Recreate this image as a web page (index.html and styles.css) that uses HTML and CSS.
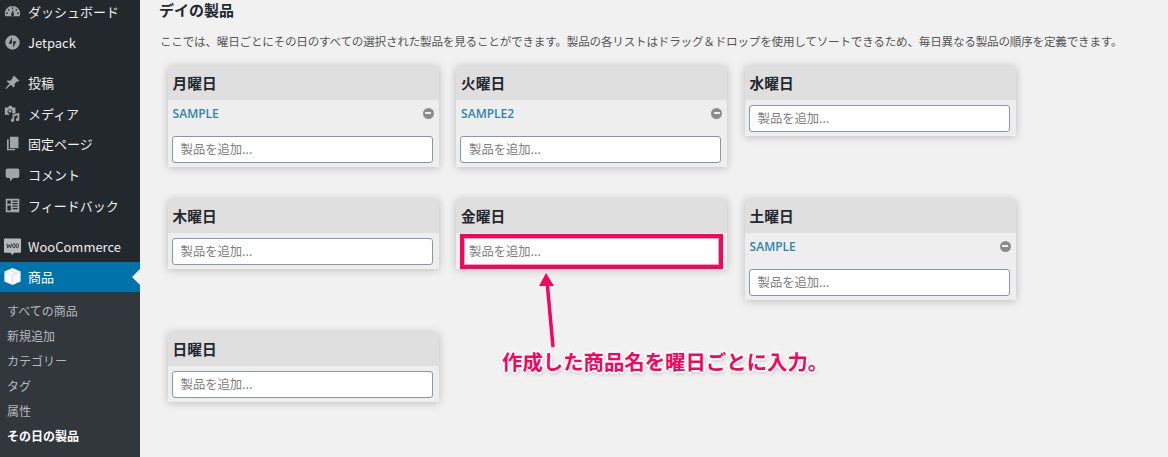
FILE: index.html
```html
<!DOCTYPE html>
<html lang="ja">
<head>
<meta charset="utf-8">
<title>デイの製品</title>
<link rel="stylesheet" href="styles.css">
</head>
<body>
<div class="page">
  <nav class="sidebar">
    <ul class="menu">
      <li class="item"><svg class="ico" viewBox="0 0 20 20"><path d="M10 3.500C5 3.500 1 7.500 1 12c0 1.300.3 2.500.8 3.500h16.400c.5-1 .8-2.200.8-3.500 0-4.500-4-8.500-9-8.500zM10 5a1 1 0 110 2 1 1 0 010-2zM5.500 7a1 1 0 110 2 1 1 0 010-2zm9 0a1 1 0 110 2 1 1 0 010-2zM3.500 11a1 1 0 110 2 1 1 0 010-2zm13 0a1 1 0 110 2 1 1 0 010-2zm-5.800-3l.8 5a1.700 1.700 0 11-3 0z" fill-rule="evenodd"/></svg><span>ダッシュボード</span></li>
      <li class="item"><svg class="ico" viewBox="0 0 20 20"><path d="M10 1.500a8.500 8.500 0 100 17 8.500 8.500 0 000-17zM9.300 11.500H5.400l3.900-7.600zm1.400-3h3.900l-3.900 7.600z" fill-rule="evenodd"/></svg><span>Jetpack</span></li>
      <li class="item item-gap"><svg class="ico" viewBox="0 0 20 20"><path d="M12 2l6 6-1.500 1-1.200-.3-3 3 .3 3-1.300 1.300-3.300-3.300-5.500 5-1-.5 5-6L3 8.800l1.300-1.300 3 .3 3-3-.3-1.300z"/></svg><span>投稿</span></li>
      <li class="item"><svg class="ico" viewBox="0 0 20 20"><path d="M1 3h4l1-2h3l1 2h3.500v7H9.500V8.800a2.800 2.800 0 10-3.500 1.400V11.500H1zM7 5.200a1.800 1.800 0 110 3.600 1.800 1.800 0 010-3.600zM10 11.500l8-2.500v8a2 2 0 11-2-2v-3l-4 1.200V18a2 2 0 11-2-2z"/></svg><span>メディア</span></li>
      <li class="item"><svg class="ico" viewBox="0 0 20 20"><path d="M7 2h10v13.500H7zM3.500 5H5.500v11.500H13V18H3.500z"/></svg><span>固定ページ</span></li>
      <li class="item"><svg class="ico" viewBox="0 0 20 20"><path d="M4 3h12a2 2 0 012 2v7a2 2 0 01-2 2h-5l-4 4v-4H4a2 2 0 01-2-2V5a2 2 0 012-2z"/></svg><span>コメント</span></li>
      <li class="item"><svg class="ico" viewBox="0 0 20 20"><path d="M2 2h16v16H2zM4 4v4h4V4zm6 0v1.500h6V4zm0 3v1.500h6V7zm-6 3v6h4v-6zm6 0v1.500h6V10zm0 3v1.500h6V13z" fill-rule="evenodd"/></svg><span>フィードバック</span></li>
      <li class="item item-gap woo"><svg class="ico woo-ico" viewBox="0 0 20 20"><path d="M2 1.500h16a1 1 0 011 1v13a1 1 0 01-1 1h-6l-2.500 2.500L8 16.500H2a1 1 0 01-1-1v-13a1 1 0 011-1z"/><path class="woo-mark" d="M4 7l1 4.500L6.500 8 8 11.500 9 7M11.500 7a1.300 2.200 0 100 4.400 1.300 2.200 0 000-4.400zM15 7a1.300 2.200 0 100 4.400 1.300 2.200 0 000-4.400z"/></svg><span>WooCommerce</span></li>
      <li class="item current"><svg class="ico" viewBox="0 0 20 20"><path d="M10 1l8.500 3.700v10.600L10 19l-8.500-3.700V4.700z"/><path class="box-line" d="M10 9v10M1.500 5l8.500 4 8.500-4M6 3l8.500 4"/></svg><span>商品</span></li>
    </ul>
    <ul class="submenu">
      <li>すべての商品</li>
      <li>新規追加</li>
      <li>カテゴリー</li>
      <li>タグ</li>
      <li>属性</li>
      <li class="sub-current">その日の製品</li>
    </ul>
  </nav>
  <main class="content">
    <h2 class="title">デイの製品</h2>
    <p class="desc">ここでは、曜日ごとにその日のすべての選択された製品を見ることができます。製品の各リストはドラッグ＆ドロップを使用してソートできるため、毎日異なる製品の順序を定義できます。</p>
    <div class="grid">
      <section class="card"><h3 class="card-head">月曜日</h3><div class="row"><a class="link">SAMPLE</a><i class="minus"></i></div><div class="field">製品を追加...</div></section>
      <section class="card"><h3 class="card-head">火曜日</h3><div class="row"><a class="link">SAMPLE2</a><i class="minus"></i></div><div class="field">製品を追加...</div></section>
      <section class="card"><h3 class="card-head">水曜日</h3><div class="field">製品を追加...</div></section>
      <section class="card"><h3 class="card-head">木曜日</h3><div class="field">製品を追加...</div></section>
      <section class="card card-hl"><h3 class="card-head">金曜日</h3><div class="field field-hl">製品を追加...</div></section>
      <section class="card"><h3 class="card-head">土曜日</h3><div class="row"><a class="link">SAMPLE</a><i class="minus"></i></div><div class="field">製品を追加...</div></section>
      <section class="card"><h3 class="card-head">日曜日</h3><div class="field">製品を追加...</div></section>
    </div>
  </main>
  <svg class="arrow" viewBox="0 0 30 90" width="30" height="90"><path d="M12 15l6 66" class="arrow-line"/><path d="M11 7l8 13H4z" class="arrow-tip"/></svg>
  <div class="note">作成した商品名を曜日ごとに入力。</div>
</div>
</body>
</html>
```
FILE: styles.css
```css
* { box-sizing: border-box; }
html, body { margin: 0; padding: 0; }
body { background: #f1f1f1; font-family: "Noto Sans CJK JP", "Open Sans", sans-serif; color: #444; }
.page { position: relative; width: 1168px; height: 457px; overflow: hidden; display: flex; }
.sidebar { width: 140px; flex: none; height: 457px; background: #23282d; overflow: hidden; }
.menu, .submenu { list-style: none; margin: 0; padding: 0; }
.menu { margin-top: -3.500px; }
.item { height: 30.6px; display: flex; align-items: center; padding-left: 4px; font-size: 13px; color: #eee; gap: 7px; }
.item-gap { margin-top: 9.800px; }
.woo { margin-top: 10.500px; }
.ico { width: 17px; height: 17px; fill: #a0a5aa; flex: none; }
.woo-ico { width: 19px; height: 19px; margin-left: -1px; margin-right: -1px; fill: #b4b9be; }
.woo-mark { fill: none; stroke: #23282d; stroke-width: .9; }
.current { background: #0073aa; color: #fff; position: relative; }
.current .ico { fill: #fff; width: 19px; height: 19px; margin-left: -1px; margin-right: -1px; }
.box-line { fill: none; stroke: #bcd6e3; stroke-width: .8; }
.current::after { content: ""; position: absolute; right: 0; top: 50%; margin-top: -8px; border: 8px solid transparent; border-right-color: #f1f1f1; border-left-width: 0; }
.submenu { background: #32373c; height: 170px; padding-top: 6px; }
.submenu li { height: 25px; line-height: 25px; padding-left: 7px; font-size: 12px; color: #b4b9be; }
.submenu .sub-current { color: #fff; font-weight: 700; }
.content { flex: 1; padding: 0 0 0 19px; min-width: 0; }
.title { margin: 0; font-size: 15px; line-height: 20px; font-weight: 700; color: #23282d; }
.desc { margin: 11px 0 0 1px; font-size: 11.600px; letter-spacing: -.22px; line-height: 20px; color: #555; white-space: nowrap; }
.grid { display: grid; grid-template-columns: repeat(3, 271px); column-gap: 17.500px; row-gap: 32px; align-items: start; margin: 15px 0 0 8.600px; }
.card { background: #eee; box-shadow: 0 1px 8px rgba(0,0,0,.22); padding-bottom: 4px; }
.card-hl { padding-bottom: 0; }
.card-head { margin: 0; height: 34px; padding-left: 5px; background: #dfdfdf; font-size: 14.700px; line-height: 34px; font-weight: 700; color: #23282d; }
.row { height: 26px; display: flex; align-items: center; justify-content: space-between; padding: 0 5px; margin-bottom: 10px; }
.link { font-family: "Open Sans", sans-serif; font-size: 12px; font-weight: 600; color: #2e85ad; }
.minus { width: 11px; height: 11px; border-radius: 50%; background: #8c8c8c; position: relative; }
.minus::after { content: ""; position: absolute; left: 2.500px; right: 2.500px; top: 4.500px; height: 2px; background: #eee; }
.field { margin: 5px 6px 0 4px; height: 27px; background: #fff; border: 1px solid #8d96a0; border-radius: 3px; padding-left: 8px; font-size: 12.300px; line-height: 25px; color: #808080; }
.field-hl { border: 4px solid #f7045c; border-radius: 0; padding-left: 5px; line-height: 26px; margin: 1px 4px 0 4px; height: 35px; box-shadow: inset 0 0 0 1px #b4b9be; }
.arrow { position: absolute; left: 535px; top: 266px; filter: drop-shadow(0 0 1px #fff); }
.arrow-line { stroke: #f7045c; stroke-width: 3.500; fill: none; }
.arrow-tip { fill: #f7045c; }
.note { position: absolute; left: 502px; top: 348px; font-size: 20.400px; line-height: 26px; font-weight: 700; color: #f7045c; white-space: nowrap; text-shadow: 1px 1px 0 #fff, -1px 1px 0 #fff, 1px -1px 0 #fff, -1px -1px 0 #fff, 2px 0 0 #fff, -2px 0 0 #fff, 0 2px 0 #fff, 0 -2px 0 #fff, 1px 2px 4px rgba(0,0,0,.3); }
```
